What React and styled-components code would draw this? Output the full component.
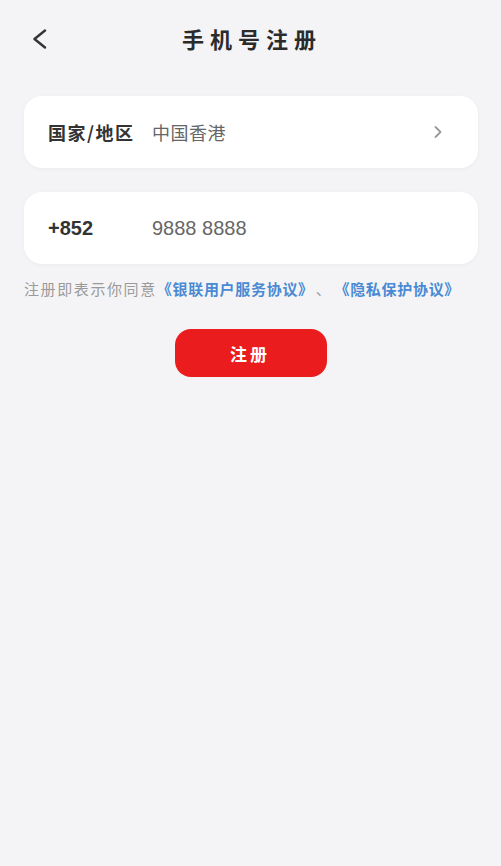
import React from 'react';
import styled, { createGlobalStyle } from 'styled-components';

const GlobalStyle = createGlobalStyle`
  html, body {
    margin: 0;
    padding: 0;
    background: #f4f4f6;
  }
  body {
    font-family: 'Noto Sans CJK SC', 'Noto Sans', sans-serif;
  }
`;

const Page = styled.div`
  width: 501px;
  min-height: 866px;
  background: #f4f4f6;
  box-sizing: border-box;
  padding: 0 23px 0 24px;
`;

const NavBar = styled.div`
  height: 76px;
  display: grid;
  grid-template-columns: 40px 1fr 40px;
  align-items: center;
`;

const BackButton = styled.button`
  border: none;
  background: none;
  padding: 2px 0 0 8px;
  display: flex;
  align-items: center;
  height: 30px;
`;

const Title = styled.h1`
  margin: 0;
  text-align: center;
  font-size: 22px;
  font-weight: 700;
  color: #2b2b2b;
  letter-spacing: 6px;
  padding-left: 2px;
`;

const Card = styled.div`
  height: 72px;
  background: #fff;
  border-radius: 18px;
  box-shadow: 0 1px 4px rgba(0, 0, 0, 0.04);
  display: flex;
  align-items: center;
  padding: 0 35px 0 24px;
  margin-top: ${(p) => p.$top}px;
`;

const Label = styled.span`
  width: 104px;
  font-size: ${(p) => (p.$num ? 20 : 18)}px;
  font-weight: 700;
  color: #333;
  letter-spacing: ${(p) => (p.$num ? 0 : 1.5)}px;
  font-family: ${(p) =>
    p.$num ? "'Liberation Sans', Arial, sans-serif" : "'Noto Sans CJK SC', sans-serif"};
`;

const Value = styled.span`
  flex: 1;
  font-size: ${(p) => (p.$num ? 20 : 18)}px;
  color: #666;
  letter-spacing: ${(p) => (p.$num ? 0 : 0.5)}px;
  font-family: ${(p) =>
    p.$num ? "'Liberation Sans', Arial, sans-serif" : "'Noto Sans CJK SC', sans-serif"};
`;

const Agreement = styled.p`
  margin: 14px 0 0;
  font-size: 15px;
  letter-spacing: 1.6px;
  color: #9a9a9a;
  white-space: nowrap;
  text-spacing-trim: space-all;
`;

const Link = styled.span`
  color: #4a8ad4;
  font-weight: 700;
  letter-spacing: 0.7px;
`;

const Sep = styled.span`
  margin: 0 2px;
`;

const ButtonRow = styled.div`
  display: flex;
  justify-content: center;
  margin-top: 30px;
`;

const SubmitButton = styled.button`
  width: 152px;
  height: 48px;
  border: none;
  border-radius: 16px;
  background: #ea1c1e;
  color: #fff;
  font-family: 'Noto Sans CJK SC', sans-serif;
  font-size: 17px;
  font-weight: 700;
  letter-spacing: 3px;
  padding-left: 4px;
`;

const BackIcon = () => (
  <svg width="15" height="20" viewBox="0 0 15 20">
    <path d="M13 1.5 L2.5 10 L13 18.5" fill="none" stroke="#333" strokeWidth="2.4" strokeLinecap="round" strokeLinejoin="round" />
  </svg>
);

const ChevronIcon = () => (
  <svg width="10" height="14" viewBox="0 0 10 14">
    <path d="M2.5 2 L7.5 7 L2.5 12" fill="none" stroke="#999" strokeWidth="1.8" strokeLinecap="round" strokeLinejoin="round" />
  </svg>
);

export default function App() {
  return (
    <Page>
      <GlobalStyle />
      <NavBar>
        <BackButton>
          <BackIcon />
        </BackButton>
        <Title>手机号注册</Title>
        <div />
      </NavBar>
      <Card $top={20}>
        <Label>国家/地区</Label>
        <Value>中国香港</Value>
        <ChevronIcon />
      </Card>
      <Card $top={24}>
        <Label $num>+852</Label>
        <Value $num>9888 8888</Value>
      </Card>
      <Agreement>
        注册即表示你同意<Link>《银联用户服务协议》</Link>
        <Sep>、</Sep>
        <Link>《隐私保护协议》</Link>
      </Agreement>
      <ButtonRow>
        <SubmitButton>注册</SubmitButton>
      </ButtonRow>
    </Page>
  );
}
